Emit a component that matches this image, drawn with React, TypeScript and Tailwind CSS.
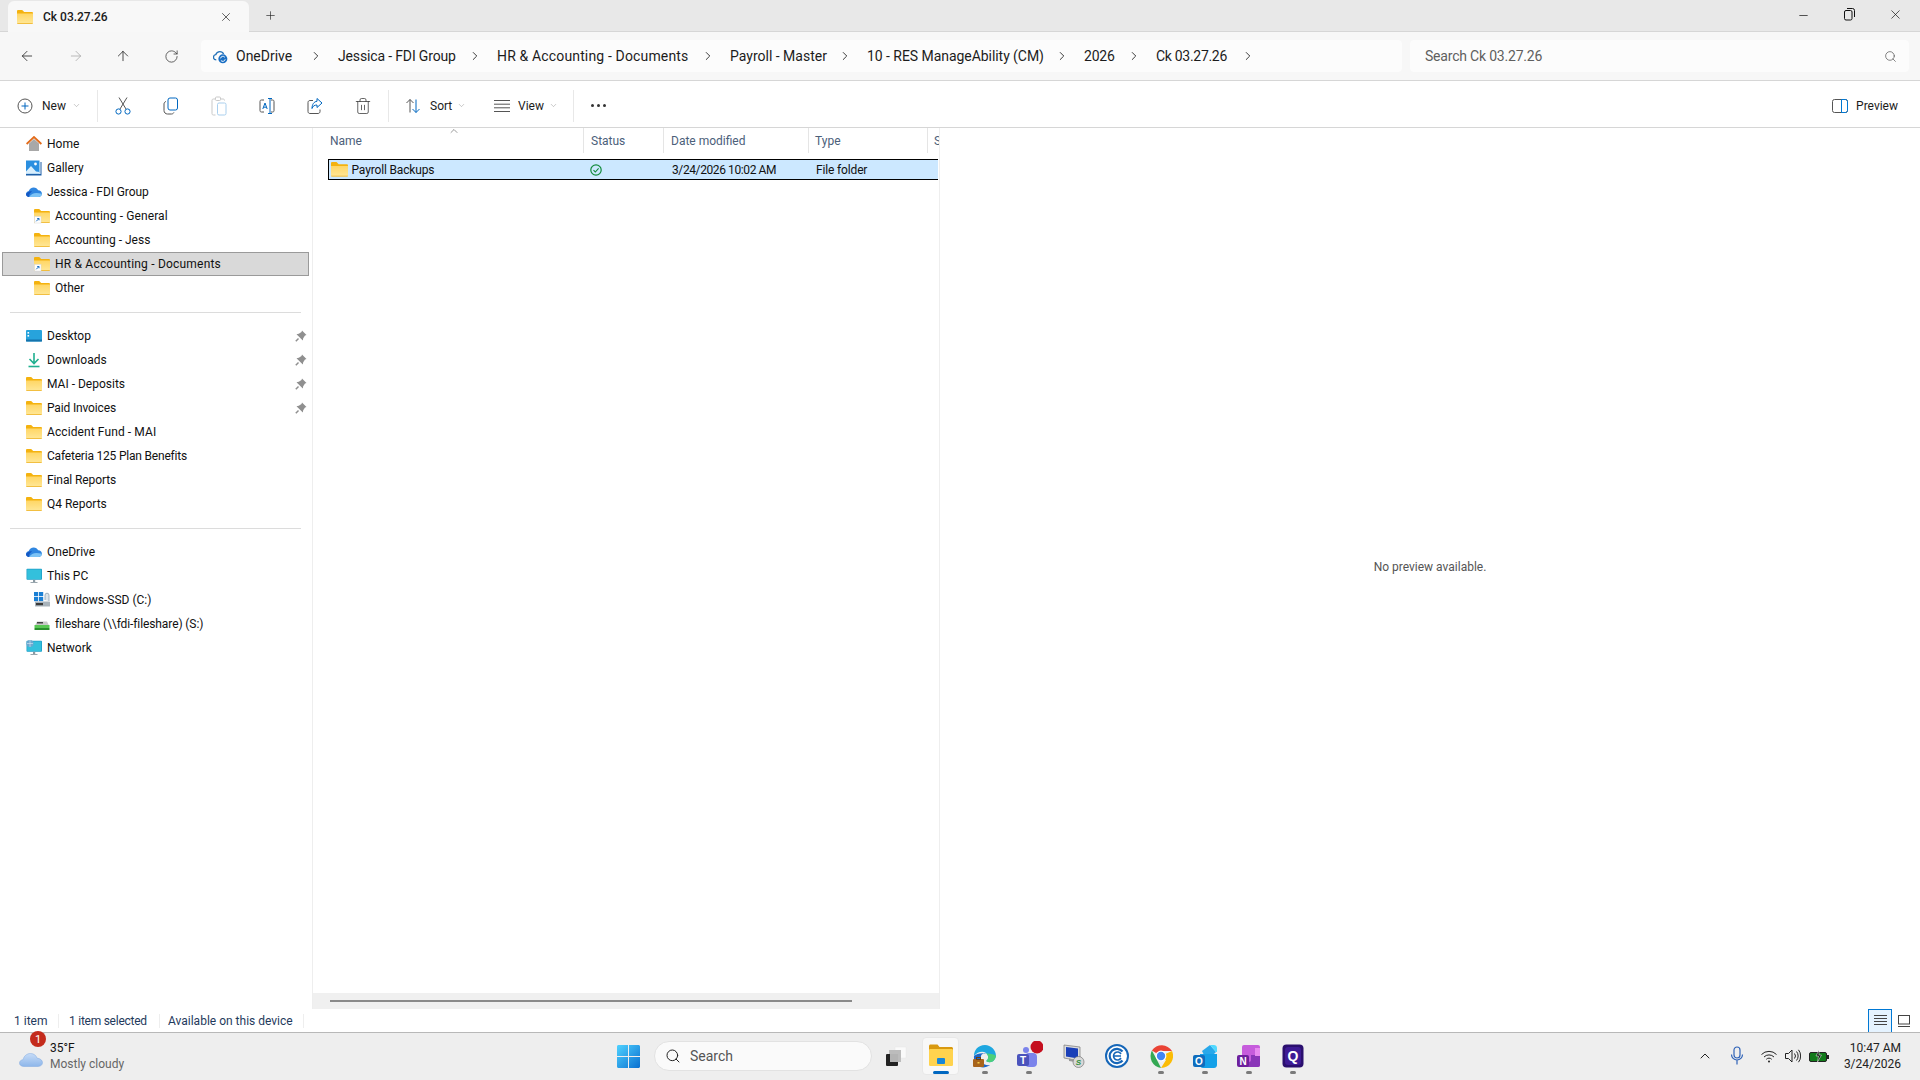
import { ReactNode } from "react";
import { ArrowLeft, ArrowRight, ArrowUp, ChevronDown, ChevronRight, ChevronUp, Minus, Plus, RotateCw, Search, Trash2, X } from "lucide-react";

function Folder({ shortcut = false, size = 16 }: { shortcut?: boolean; size?: number }) {
  return (
    <svg width={size} height={size} viewBox="0 0 16 16" className="shrink-0">
      <defs>
        <linearGradient id="folderFront" x1="0" y1="0" x2="0" y2="1">
          <stop offset="0" stopColor="#ffd665" />
          <stop offset="1" stopColor="#ffe797" />
        </linearGradient>
      </defs>
      <path d="M0 2.2C0 1.5.5 1 1.2 1h4l2 2h7.6c.7 0 1.2.5 1.2 1.2V7H0z" fill="#f4b20f" />
      <path d="M0 4.6h16v8.900c0 .7-.5 1.200-1.200 1.200H1.200C.5 14.700 0 14.200 0 13.500z" fill="url(#folderFront)" />
      <path d="M0 13.900h16c0 .5-.5.8-1.200.8H1.200c-.7 0-1.200-.3-1.200-.8z" fill="#eeb01c" />
      {shortcut && (
        <g>
          <rect x="0.5" y="8.500" width="6.500" height="6.500" fill="#fff" stroke="#d8d8d8" strokeWidth="0.5" />
          <path d="M2.200 13.300 L4.800 10.700 M3.200 10.500h1.800v1.800" stroke="#1a6fc4" strokeWidth="1" fill="none" />
        </g>
      )}
    </svg>
  );
}

function HomeIcon() {
  return (
    <svg width="16" height="16" viewBox="0 0 16 16">
      <path d="M3 7.500 8 3l5 4.500V15H3z" fill="#a8a8a8" />
      <path d="M0.600 8 8 1l7.400 7" fill="none" stroke="#e26b1a" strokeWidth="1.800" />
    </svg>
  );
}

function GalleryIcon() {
  return (
    <svg width="16" height="16" viewBox="0 0 16 16">
      <rect x="0" y="0.500" width="13.500" height="13" fill="#2b8fe0" />
      <circle cx="9.500" cy="4" r="1.400" fill="#fff" />
      <path d="M0 11.500 5 6l5 5.500 3.500 .5v1.500H0z" fill="#d9eefc" />
      <rect x="0" y="14" width="15.500" height="1.500" fill="#1c5fa8" />
      <rect x="14.500" y="2" width="1" height="12" fill="#1c5fa8" />
    </svg>
  );
}

function CloudIcon() {
  return (
    <svg width="16" height="16" viewBox="0 0 16 16">
      <path d="M3.200 13C1.400 13 0 11.700 0 10.100 0 8.600 1.100 7.400 2.600 7.200 3.400 4.900 5.400 3.400 7.700 3.400c2 0 3.700 1.100 4.500 2.900 2.100.1 3.800 1.700 3.800 3.500 0 1.800-1.600 3.200-3.500 3.200z" fill="#2f86e0" />
      <path d="M3 13 C6 9 9 8 16 9.800 15.800 11.700 14.300 13 12.500 13z" fill="#7cc3f5" />
      <path d="M0 10C2 7.500 4 7 6 7.500 3.500 9 3 11 3.200 13 1.400 13 0 11.700 0 10z" fill="#1458c4" />
    </svg>
  );
}

function DesktopIcon() {
  return (
    <svg width="16" height="16" viewBox="0 0 16 16">
      <rect x="0" y="2" width="16" height="11.500" rx="1" fill="#27a3dc" />
      <rect x="0" y="11.500" width="16" height="2" fill="#1573ab" />
      <rect x="1.500" y="4" width="1.600" height="1.600" fill="#fff" />
      <rect x="1.500" y="7" width="1.600" height="1.600" fill="#fff" />
    </svg>
  );
}

function DownloadIcon() {
  return (
    <svg width="16" height="16" viewBox="0 0 16 16" fill="none" stroke="#1fb08f" strokeWidth="1.600">
      <path d="M8 1v10M3.500 7 8 11.500 12.500 7" />
      <path d="M2.500 14.500h11" />
    </svg>
  );
}

function MonitorIcon({ globe = false }: { globe?: boolean }) {
  return (
    <svg width="16" height="16" viewBox="0 0 16 16">
      <rect x="0.500" y="0.800" width="15.500" height="11" rx="0.800" fill="#1f9fc8" />
      <rect x="1.200" y="1.500" width="14" height="9.600" fill="#33c0dc" />
      <rect x="7" y="11.800" width="2.200" height="2.400" fill="#8a9aa3" />
      <rect x="4.500" y="14" width="7" height="1" fill="#9aa7ae" />
      {globe && <circle cx="4" cy="3.500" r="3.500" fill="#6ba7cf" />}
      {globe && <path d="M1 3.500h6M4 0v7" stroke="#dcebf5" strokeWidth="0.600" />}
    </svg>
  );
}

function SsdIcon() {
  return (
    <svg width="16" height="16" viewBox="0 0 16 16">
      <rect x="0" y="0" width="4.200" height="4.200" fill="#1a7fd4" />
      <rect x="5" y="0" width="4.200" height="4.200" fill="#1a7fd4" />
      <rect x="0" y="5" width="4.200" height="4.200" fill="#1a7fd4" />
      <rect x="5" y="5" width="4.200" height="4.200" fill="#1a7fd4" />
      <rect x="1" y="9.500" width="15" height="5" rx="0.600" fill="#a9b3bb" />
      <rect x="2" y="11" width="7" height="2.200" fill="#3a3a3a" />
      <path d="M11 8V3.200a2 2 0 0 1 4 0V9" fill="#dce3e8" stroke="#8ba0b0" strokeWidth="0.800" />
    </svg>
  );
}

function ShareDriveIcon() {
  return (
    <svg width="16" height="16" viewBox="0 0 16 16">
      <path d="M3 5.500h10l2 4H1z" fill="#c9c9c9" />
      <rect x="0.500" y="9" width="15" height="3" fill="#59c754" />
      <rect x="0.500" y="12" width="15" height="2" fill="#2a8f2d" />
      <rect x="3" y="6" width="6" height="1.500" fill="#444" />
    </svg>
  );
}

function Pin() {
  return (
    <svg width="12" height="12" viewBox="0 0 12 12" className="absolute right-[2px] top-[6px]">
      <path d="M7 0.500 11.500 5 10 5.500 8.200 8.200 7.800 10.500 1.500 4.200 3.800 3.800 6.500 2z" fill="#8f8f8f" />
      <path d="M3.500 8.500 0.800 11.200" stroke="#8f8f8f" strokeWidth="1.500" />
    </svg>
  );
}

function NavRow({ icon, label, nested = false, pinned = false, selected = false, fit = "" }: { icon: ReactNode; label: string; nested?: boolean; pinned?: boolean; selected?: boolean; fit?: string }) {
  return (
    <div className={`relative ml-[2px] flex h-[24px] w-[307px] items-center gap-[5px] ${selected ? "border border-[#9a9a9a] bg-[#d9d9d9] pl-[31px]" : nested ? "pl-[32px]" : "pl-[24px]"}`}>
      {icon}
      <span className={`whitespace-nowrap text-[12px] text-[#111] ${fit}`}>{label}</span>
      {pinned && <Pin />}
    </div>
  );
}

function NavSep() {
  return <div className="my-[11.500px] ml-[10px] h-px w-[291px] bg-[#dcdcdc]" />;
}

function Sidebar() {
  return (
    <aside className="w-[313px] shrink-0 border-r border-[#eeeeee] pt-[4px]">
      <NavRow icon={<HomeIcon />} label="Home" />
      <NavRow icon={<GalleryIcon />} label="Gallery" />
      <NavRow icon={<CloudIcon />} label="Jessica - FDI Group" fit="tracking-[-0.1px]" />
      <NavRow icon={<Folder shortcut />} label="Accounting - General" nested fit="tracking-[0.1px]" />
      <NavRow icon={<Folder />} label="Accounting - Jess" nested />
      <NavRow icon={<Folder shortcut />} label="HR & Accounting - Documents" nested selected fit="tracking-[0.2px]" />
      <NavRow icon={<Folder />} label="Other" nested />
      <NavSep />
      <NavRow icon={<DesktopIcon />} label="Desktop" pinned />
      <NavRow icon={<DownloadIcon />} label="Downloads" pinned />
      <NavRow icon={<Folder />} label="MAI - Deposits" pinned />
      <NavRow icon={<Folder />} label="Paid Invoices" pinned fit="tracking-[-0.15px]" />
      <NavRow icon={<Folder />} label="Accident Fund - MAI" fit="tracking-[0.1px]" />
      <NavRow icon={<Folder />} label="Cafeteria 125 Plan Benefits" fit="tracking-[-0.2px]" />
      <NavRow icon={<Folder />} label="Final Reports" fit="tracking-[-0.1px]" />
      <NavRow icon={<Folder />} label="Q4 Reports" />
      <NavSep />
      <NavRow icon={<CloudIcon />} label="OneDrive" />
      <NavRow icon={<MonitorIcon />} label="This PC" />
      <NavRow icon={<SsdIcon />} label="Windows-SSD (C:)" nested />
      <NavRow icon={<ShareDriveIcon />} label="fileshare (\\fdi-fileshare) (S:)" nested fit="tracking-[-0.1px]" />
      <NavRow icon={<MonitorIcon globe />} label="Network" />
    </aside>
  );
}

function ToolSep() {
  return <div className="h-[32px] w-px shrink-0 bg-[#e8e8e8]" />;
}

function ToolIcon({ children }: { children: ReactNode }) {
  return <div className="flex w-[48px] shrink-0 justify-center">{children}</div>;
}

function TabBar() {
  return (
    <div className="flex h-[32px] shrink-0 items-start border-b border-[#d6d6d6] bg-[#e8e8e8]">
      <div className="ml-[8px] mt-[1px] flex h-[31px] w-[241px] items-center rounded-t-[6px] bg-[#f8f8f8] pl-[9px]">
        <Folder size={16} />
        <span className="ml-[10px] text-[12px] font-medium text-[#1a1a1a]">Ck 03.27.26</span>
        <X size={14} strokeWidth={1.1} className="ml-auto mr-[16px] text-[#111]" />
      </div>
      <Plus size={13} strokeWidth={1.2} className="ml-[15px] mt-[9px] text-[#222]" />
      <div className="ml-auto flex items-center text-[#111]">
        <Minus size={13} strokeWidth={1.3} className="mr-[34px] mt-[8px]" />
        <svg width="11" height="13" viewBox="0 0 11 13" fill="none" stroke="#111" className="mr-[33px] mt-[7px]">
          <rect x="0.500" y="2.500" width="7.500" height="9.500" rx="1.500" />
          <path d="M3 0.500h5.500a2 2 0 0 1 2 2V9" />
        </svg>
        <X size={15} strokeWidth={1.1} className="mr-[17px] mt-[7px]" />
      </div>
    </div>
  );
}

function Crumbs() {
  const parts = [
    { label: "OneDrive", w: "w-[102px]", fit: "" },
    { label: "Jessica - FDI Group", w: "w-[159px]", fit: "tracking-[-0.15px]" },
    { label: "HR & Accounting - Documents", w: "w-[233px]", fit: "tracking-[0.15px]" },
    { label: "Payroll - Master", w: "w-[137px]", fit: "" },
    { label: "10 - RES ManageAbility (CM)", w: "w-[217px]", fit: "tracking-[-0.05px]" },
    { label: "2026", w: "w-[72px]", fit: "tracking-[-0.2px]" },
    { label: "Ck 03.27.26", w: "w-[114px]", fit: "tracking-[-0.3px]" },
  ];
  return (
    <div className="flex h-[32px] w-[1201px] items-center rounded-[4px] bg-[#fcfcfc] pl-[12px]">
      <svg width="15" height="15" viewBox="0 0 16 16" className="mr-[8px] shrink-0">
        <path d="M3.500 11.500C1.800 11.500.5 10.300.5 8.800c0-1.400 1-2.500 2.400-2.700C3.600 4 5.300 2.700 7.300 2.700c1.800 0 3.300 1 4 2.600" fill="none" stroke="#2271b8" strokeWidth="1.400" />
        <circle cx="10.500" cy="10.500" r="4.800" fill="#1a6fc4" />
        <path d="M8 10a2.600 2.600 0 0 1 4.600-1.200M13 11a2.600 2.600 0 0 1-4.600 1.200" stroke="#fff" strokeWidth="1" fill="none" />
      </svg>
      {parts.map((p) => (
        <div key={p.label} className={`${p.w} flex shrink-0 items-center`}>
          <span className={`whitespace-nowrap text-[14px] text-[#1c1c1c] ${p.fit}`}>{p.label}</span>
          <ChevronRight size={14} strokeWidth={1.4} className="ml-auto mr-[15px] shrink-0 text-[#111]" />
        </div>
      ))}
    </div>
  );
}

function AddressRow() {
  return (
    <div className="flex h-[49px] shrink-0 items-center border-b border-[#d6d6d6] bg-[#f7f7f7]">
      <ArrowLeft size={16} strokeWidth={1.2} className="ml-[19px] shrink-0 text-[#222]" />
      <ArrowRight size={16} strokeWidth={1.2} className="ml-[33px] shrink-0 text-[#aaa]" />
      <ArrowUp size={16} strokeWidth={1.2} className="ml-[31px] shrink-0 text-[#222]" />
      <RotateCw size={15} strokeWidth={1.2} className="ml-[33px] mr-[22px] shrink-0 text-[#333]" />
      <Crumbs />
      <div className="ml-[8px] flex h-[32px] w-[499px] items-center justify-between rounded-[4px] bg-[#fcfcfc] pl-[15px] pr-[12px]">
        <span className="text-[14px] tracking-[-0.2px] text-[#5f5f5f]">Search Ck 03.27.26</span>
        <Search size={13} strokeWidth={1.2} className="text-[#444]" />
      </div>
    </div>
  );
}

function Toolbar() {
  return (
    <div className="flex h-[47px] shrink-0 items-center border-b border-[#d6d6d6] bg-white pt-[3px] text-[#1c1c1c]">
      <svg width="16" height="16" viewBox="0 0 16 16" fill="none" className="ml-[17px] shrink-0">
        <circle cx="8" cy="8" r="7" stroke="#555" />
        <path d="M8 4.500v7M4.500 8h7" stroke="#0067c0" />
      </svg>
      <span className="ml-[9px] w-[25px] text-[12px]">New</span>
      <ChevronDown size={9} strokeWidth={1.2} className="ml-[5px] mr-[16px] text-[#888]" />
      <ToolSep />
      <div className="ml-[1px]" />
      <ToolIcon>
        <svg width="16" height="20" viewBox="0 0 16 20" fill="none">
          <path d="M4 1.500 11 13M12 1.500 5 13" stroke="#555" />
          <circle cx="3.500" cy="15.500" r="2.600" stroke="#0067c0" />
          <circle cx="12.500" cy="15.500" r="2.600" stroke="#0067c0" />
        </svg>
      </ToolIcon>
      <ToolIcon>
        <svg width="16" height="18" viewBox="0 0 16 18" fill="none">
          <rect x="5" y="1" width="9.500" height="12" rx="2" stroke="#0067c0" />
          <path d="M3 4.500c-1.200.3-2 1.200-2 2.500v6.500c0 2 1.500 3.500 3.500 3.500h4c1 0 2-.6 2.400-1.500" stroke="#555" />
        </svg>
      </ToolIcon>
      <ToolIcon>
        <svg width="16" height="20" viewBox="0 0 16 20" fill="none">
          <path d="M4 3H2.500C1.500 3 1 3.500 1 4.500v13c0 1 .5 1.500 1.500 1.500h2" stroke="#c9c9c9" />
          <rect x="4.500" y="1" width="5" height="3.500" rx="1" stroke="#c9c9c9" />
          <path d="M10 3h2c1 0 1.500.5 1.500 1.500" stroke="#c9c9c9" />
          <rect x="6.500" y="7" width="8.500" height="12" rx="1.500" stroke="#a9cfee" />
        </svg>
      </ToolIcon>
      <ToolIcon>
        <svg width="16" height="18" viewBox="0 0 16 18" fill="none">
          <path d="M5 3H2.500C1.500 3 1 3.500 1 4.500v9c0 1 .5 1.500 1.500 1.500H5M12 3h1.500c1 0 1.500.5 1.500 1.500v9c0 1-.5 1.500-1.500 1.500H12" stroke="#555" />
          <path d="M9 1.500h4M9 16.500h4M11 1.500v15" stroke="#0067c0" />
          <path d="M3.800 12 6 6l2.200 6M4.500 10.200h3" stroke="#0067c0" />
        </svg>
      </ToolIcon>
      <ToolIcon>
        <svg width="16" height="18" viewBox="0 0 16 18" fill="none">
          <path d="M6 3.500H3C1.800 3.500 1 4.300 1 5.500v9C1 15.700 1.800 16.500 3 16.500h8c1.200 0 2-.8 2-2v-2" stroke="#555" />
          <path d="M10 1.500 15 6l-5 4.500V8C7.500 8 6 9 5 11.500 5 7.500 7 4.500 10 4.300z" stroke="#0067c0" strokeLinejoin="round" />
        </svg>
      </ToolIcon>
      <ToolIcon>
        <Trash2 size={18} strokeWidth={1} className="text-[#333]" />
      </ToolIcon>
      <div className="ml-[1px]" />
      <ToolSep />
      <svg width="16" height="16" viewBox="0 0 16 16" fill="none" className="ml-[16px] shrink-0">
        <path d="M5 14.500V1.500M1.500 5 5 1.500 8.500 5" stroke="#555" />
        <path d="M11 1.500v13M7.500 11l3.500 3.500 3.500-3.500" stroke="#0067c0" />
      </svg>
      <span className="ml-[9px] w-[21px] text-[12px]">Sort</span>
      <ChevronDown size={9} strokeWidth={1.2} className="ml-[6px] text-[#888]" />
      <svg width="16" height="12" viewBox="0 0 16 12" stroke="#555" className="ml-[28px] shrink-0">
        <path d="M0 .5h16M0 4.200h16M0 7.800h16M0 11.500h16" />
      </svg>
      <span className="ml-[8px] w-[26px] text-[12px]">View</span>
      <ChevronDown size={9} strokeWidth={1.2} className="ml-[5px] mr-[15px] text-[#888]" />
      <ToolSep />
      <div className="ml-[17px] flex gap-[3px]">
        <span className="h-[3px] w-[3px] rounded-full bg-[#333]" />
        <span className="h-[3px] w-[3px] rounded-full bg-[#333]" />
        <span className="h-[3px] w-[3px] rounded-full bg-[#333]" />
      </div>
      <svg width="16" height="14" viewBox="0 0 16 14" fill="none" className="ml-auto shrink-0">
        <rect x="0.500" y="0.500" width="15" height="13" rx="2" stroke="#555" />
        <path d="M9.500 .5h4c1.200 0 2 .8 2 2v9c0 1.200-.8 2-2 2h-4z" stroke="#0078d4" />
      </svg>
      <span className="ml-[8px] mr-[22px] text-[12px]">Preview</span>
    </div>
  );
}

function FilePane() {
  const cols = [
    { label: "Name", w: "w-[271px] pl-[17px]" },
    { label: "Status", w: "w-[80px] pl-[7px]" },
    { label: "Date modified", w: "w-[145px] pl-[7px]" },
    { label: "Type", w: "w-[119px] pl-[6px]" },
    { label: "S", w: "w-[11px] pl-[6px]" },
  ];
  return (
    <section className="flex w-[627px] shrink-0 flex-col border-r border-[#eeeeee]">
      <div className="relative flex h-[25px] shrink-0 overflow-hidden text-[12px] text-[#4c607a]">
        <ChevronUp size={12} strokeWidth={1.2} className="absolute left-[135px] top-[-3px] text-[#555]" />
        {cols.map((c) => (
          <div key={c.label} className={`${c.w} flex h-full shrink-0 items-center overflow-hidden whitespace-nowrap border-r border-[#e5e5e5] last:border-r-0`}>
            {c.label}
          </div>
        ))}
      </div>
      <div className="ml-[14.500px] mt-[6px] flex h-[21px] w-[610px] shrink-0 items-center border-y border-l border-black bg-[#cce8ff] text-[12px] text-[#111]">
        <div className="flex w-[256.500px] shrink-0 items-center pl-[2px]">
          <Folder size={17} />
          <span className="ml-[4px] tracking-[-0.15px]">Payroll Backups</span>
        </div>
        <div className="w-[80px] shrink-0 pl-[5px]">
          <svg width="12" height="12" viewBox="0 0 12 12" fill="none" stroke="#118a3a">
            <circle cx="6" cy="6" r="5.200" strokeWidth="1.200" />
            <path d="M3.500 6.200 5.300 8 8.600 4.400" strokeWidth="1.100" />
          </svg>
        </div>
        <div className="w-[144px] shrink-0 whitespace-nowrap pl-[7px] tracking-[-0.4px]">3/24/2026 10:02 AM</div>
        <div className="pl-[7px] tracking-[-0.15px]">File folder</div>
      </div>
      <div className="mt-auto flex h-[16px] shrink-0 items-center bg-[#f0f0f0] pl-[17px]">
        <div className="h-[2px] w-[522px] bg-[#8a8a8a]" />
      </div>
    </section>
  );
}

function StatusBar() {
  return (
    <div className="flex h-[23px] shrink-0 items-center bg-white text-[12px] text-[#1f3a5c]">
      <span className="ml-[14px] w-[43.500px]">1 item</span>
      <div className="h-[14px] w-px bg-[#eeeeee]" />
      <span className="ml-[10.500px] w-[89.500px] whitespace-nowrap tracking-[-0.25px]">1 item selected</span>
      <div className="h-[14px] w-px bg-[#eeeeee]" />
      <span className="ml-[8.500px] w-[135px] whitespace-nowrap">Available on this device</span>
      <div className="h-[14px] w-px bg-[#eeeeee]" />
      <div className="ml-auto flex h-full items-center">
        <div className="flex h-[24px] w-[24px] items-center justify-center border border-[#0078d4] bg-[#e5f3ff]">
          <svg width="13" height="11" viewBox="0 0 13 11" stroke="#444">
            <path d="M0 .5h13M0 3.500h13M0 6.500h13M0 9.500h13" />
          </svg>
        </div>
        <svg width="12" height="12" viewBox="0 0 12 12" fill="none" stroke="#444" className="ml-[6px] mr-[10px]">
          <rect x="0.500" y="0.500" width="11" height="8.500" />
          <path d="M0 11.500h12" />
        </svg>
      </div>
    </div>
  );
}

function AppSlot({ children, dot = false }: { children: ReactNode; dot?: boolean }) {
  return (
    <div className="relative flex h-[38px] w-[44px] shrink-0 items-center justify-center">
      {children}
      {dot && <span className="absolute bottom-[1px] h-[3px] w-[6px] rounded-full bg-[#7a7a7a]" />}
    </div>
  );
}

function Taskbar() {
  return (
    <footer className="flex h-[48px] shrink-0 items-center border-t border-[#b8b8b8] bg-[#eeeeee] pb-[1px]">
      <div className="relative w-[617px] shrink-0 pl-[50px] text-[12px] leading-[16px]">
        <svg width="24" height="16" viewBox="0 0 24 16" className="absolute left-[19px] top-[11px]">
          <defs>
            <linearGradient id="wx" x1="0" y1="0" x2="0" y2="1">
              <stop offset="0" stopColor="#c7dcf7" />
              <stop offset="1" stopColor="#8db6ea" />
            </linearGradient>
          </defs>
          <path d="M5 15.500C2.300 15.500.5 14 .5 12c0-1.800 1.500-3.200 3.500-3.300C5 5 7.700 2.500 11.500 2.500c3.300 0 5.700 2 6.500 4.600 3 .2 5.500 2.200 5.500 4.500 0 2.200-1.800 3.900-4.500 3.900z" fill="url(#wx)" stroke="#7ea8e0" strokeWidth="0.500" />
        </svg>
        <span className="absolute left-[30px] top-[-9px] flex h-[16px] w-[16px] items-center justify-center rounded-full bg-[#c42b1c] text-[11px] leading-none text-white">1</span>
        <div className="text-[#111]">35°F</div>
        <div className="text-[#666]">Mostly cloudy</div>
      </div>
      <svg width="23" height="23" viewBox="0 0 23 23" className="shrink-0">
        <defs>
          <linearGradient id="win" x1="0" y1="0" x2="1" y2="1">
            <stop offset="0" stopColor="#4fd2ff" />
            <stop offset="1" stopColor="#0a6fd0" />
          </linearGradient>
        </defs>
        <path d="M0 1.500C0 .7.700 0 1.500 0H11v11H0zM12 0h9.500c.8 0 1.500.7 1.500 1.500V11H12zM0 12h11v11H1.500C.7 23 0 22.300 0 21.500zM12 12h11v9.500c0 .8-.7 1.500-1.500 1.500H12z" fill="url(#win)" />
      </svg>
      <div className="ml-[14px] flex h-[30px] w-[218px] shrink-0 items-center rounded-full border border-[#e2e2e2] bg-[#fafafa] pl-[10px]">
        <Search size={16} strokeWidth={1.5} className="text-[#222]" />
        <span className="ml-[9px] text-[14px] text-[#555]">Search</span>
      </div>
      <div className="ml-[12px] flex w-[24px] shrink-0 justify-center">
        <svg width="24" height="24" viewBox="0 0 24 24">
          <rect x="11" y="3" width="11" height="11" fill="#fafafa" stroke="#e8e8e8" strokeWidth="0.500" />
          <rect x="5" y="6" width="12" height="12" fill="#bcbcbc" />
          <rect x="2" y="10" width="12" height="12" rx="1" fill="#222" />
          <rect x="6" y="10" width="8" height="8" fill="#b4b4b4" />
        </svg>
      </div>
      <div className="ml-[11px] flex items-center">
        <AppSlot>
          <div className="absolute left-[3px] top-0 h-[38px] w-[37px] rounded-[4px] border border-[#e8e8e8] bg-[#f8f8f8]" />
          <svg width="24" height="24" viewBox="0 0 24 24" className="relative mb-[2px]">
            <path d="M0 3c0-.800.700-1.500 1.500-1.500h7l2 2.500h12c.800 0 1.500.7 1.500 1.500V9H0z" fill="#d99a10" />
            <rect x="0" y="6" width="24" height="17" rx="1.200" fill="#ffd34e" />
            <rect x="8" y="15" width="8" height="6" rx="1" fill="#1787d8" />
          </svg>
          <span className="absolute bottom-[1px] h-[3px] w-[16px] rounded-full bg-[#0067c0]" />
        </AppSlot>
        <AppSlot dot>
          <svg width="24" height="24" viewBox="0 0 24 24">
            <path d="M12 1C5 1 1 6 1 12c4-5 12-6 14 0 1 3-2 5-2 5 5 3 9 0 10-5C23 6 18 1 12 1z" fill="#1ea7e0" />
            <path d="M23 12c-1 5-5 8-10 5 0 0 3-2 2-5-.3-1-1-2-2-2.500 5 0 9 1 10 2.500z" fill="#4ccf7a" />
            <path d="M1 12c-.500 5 2 9 6 11 3 .8 7 .500 10-2-6 1-10-3-9-9 .5-2 3-3 5-2.500-5-1-10 .5-12 2.500z" fill="#1b66c9" />
            <rect x="0" y="15" width="11" height="8" rx="1" fill="#a8641c" />
            <rect x="3.500" y="13.500" width="4" height="2" fill="none" stroke="#6b3f10" />
            <rect x="4.500" y="18" width="2" height="1.500" fill="#f5d04b" />
          </svg>
        </AppSlot>
        <AppSlot dot>
          <svg width="28" height="30" viewBox="0 0 28 30">
            <circle cx="22" cy="6" r="6.500" fill="#c50f1f" />
            <circle cx="11" cy="9" r="3" fill="#7b83eb" />
            <rect x="10" y="12" width="12" height="14" rx="4" fill="#7b83eb" />
            <rect x="2" y="13" width="12" height="12" rx="2" fill="#4b53bc" />
            <text x="8" y="22.500" textAnchor="middle" fontSize="10" fontWeight="700" fill="#fff" fontFamily="Liberation Sans">T</text>
          </svg>
        </AppSlot>
        <AppSlot>
          <svg width="24" height="26" viewBox="0 0 24 26">
            <path d="M3 2 19 4v14L3 15z" fill="#dcdcdc" stroke="#777" strokeWidth="0.700" />
            <path d="M5 4 17 5.500v10L5 13.500z" fill="#1a3fb8" />
            <path d="M8 15.500 14 17v2l-6-1z" fill="#9a9a9a" />
            <circle cx="17.500" cy="19" r="5.500" fill="#d8d8d8" stroke="#777" strokeWidth="0.700" />
            <text x="17.500" y="22" textAnchor="middle" fontSize="8" fontWeight="700" fontStyle="italic" fill="#2f8f3a" fontFamily="Liberation Sans">S</text>
          </svg>
        </AppSlot>
        <AppSlot>
          <svg width="24" height="24" viewBox="0 0 24 24" fill="none">
            <circle cx="12" cy="12" r="11" stroke="#1566b8" strokeWidth="2" fill="#fff" />
            <path d="M17.500 7.500A7.200 7.200 0 1 0 17.500 16.500" stroke="#1566b8" strokeWidth="2.200" />
            <path d="M16 10A4 4 0 1 0 16 14M9 12h7" stroke="#1566b8" strokeWidth="1.600" />
          </svg>
        </AppSlot>
        <AppSlot dot>
          <svg width="24" height="24" viewBox="0 0 24 24">
            <path d="M12 12 2.900 6.500A12 12 0 0 1 23 7H12z" fill="#ea4335" />
            <path d="M12 12 23 7a12 12 0 0 1-11 17l5-8z" fill="#fbbc05" />
            <path d="M12 24A12 12 0 0 1 2.900 6.500L8 16z" fill="#34a853" />
            <circle cx="12" cy="12" r="5.400" fill="#fff" />
            <circle cx="12" cy="12" r="4.200" fill="#4285f4" />
          </svg>
        </AppSlot>
        <AppSlot dot>
          <svg width="24" height="24" viewBox="0 0 24 24">
            <path d="M9 7 17 1l6 7-9 9z" fill="#28a8ea" />
            <path d="M17 1h4c1.500 0 3 1 3 3v4h-1z" fill="#50d9ff" />
            <path d="M7 10h17v11c0 1.500-1 3-3 3H10c-2 0-3-1.500-3-3z" fill="#14a0e8" />
            <rect x="0" y="11" width="12" height="12" rx="2" fill="#0f6cbd" />
            <text x="6" y="20.500" textAnchor="middle" fontSize="10" fontWeight="700" fill="#fff" fontFamily="Liberation Sans">O</text>
          </svg>
        </AppSlot>
        <AppSlot dot>
          <svg width="24" height="24" viewBox="0 0 24 24">
            <rect x="5" y="1" width="18" height="22" rx="2" fill="#c65cdc" />
            <path d="M14 11h9v10c0 1-1 2-2 2H5v-5h7c1 0 2-1 2-2z" fill="#8a36b8" />
            <rect x="18" y="4" width="5" height="8" fill="#e88af0" />
            <rect x="0" y="11" width="12" height="12" rx="2" fill="#6d1f9c" />
            <text x="6" y="20.500" textAnchor="middle" fontSize="10" fontWeight="700" fill="#fff" fontFamily="Liberation Sans">N</text>
          </svg>
        </AppSlot>
        <AppSlot dot>
          <svg width="22" height="24" viewBox="0 0 22 24">
            <rect x="0.500" y="0.500" width="21" height="23" rx="4" fill="#2a0f6e" />
            <rect x="3" y="3" width="16" height="18" rx="3" fill="#3d1a94" />
            <text x="11" y="17" textAnchor="middle" fontSize="14" fontWeight="700" fill="#fff" fontFamily="Liberation Sans">Q</text>
          </svg>
        </AppSlot>
      </div>
      <div className="ml-auto flex items-center text-[#222]">
        <ChevronUp size={16} strokeWidth={1.5} />
        <svg width="14" height="20" viewBox="0 0 14 20" fill="none" stroke="#2f63b8" strokeWidth="1.200" className="ml-[17px]">
          <rect x="4" y="1" width="6" height="11" rx="3" />
          <path d="M1.500 8.500a5.500 5.500 0 0 0 11 0M7 14v4.500" />
        </svg>
        <svg width="16" height="13" viewBox="0 0 16 13" fill="none" stroke="#222" className="ml-[17px]">
          <path d="M.5 4.500a10.500 10.500 0 0 1 15 0M3 7a7 7 0 0 1 10 0M5.300 9.300a3.700 3.700 0 0 1 5.400 0" />
          <circle cx="8" cy="11.500" r="1" fill="#222" stroke="none" />
        </svg>
        <svg width="16" height="14" viewBox="0 0 16 14" fill="none" stroke="#222" className="ml-[8px]">
          <path d="M.5 4.500h3L7 1v12L3.500 9.500h-3z" />
          <path d="M9.500 4.500a4 4 0 0 1 0 5M11.500 2.500a7 7 0 0 1 0 9M13.500.8a10 10 0 0 1 0 12.400" />
        </svg>
        <svg width="20" height="12" viewBox="0 0 20 12" className="ml-[8px]">
          <rect x="0.500" y="2.500" width="17" height="9" rx="1.500" fill="#117a1a" stroke="#222" />
          <rect x="18" y="5" width="2" height="4" fill="#222" />
          <path d="M10 0 7 6h2.500L8.500 12 12.500 5H10z" fill="#111" stroke="#fff" strokeWidth="0.500" />
        </svg>
        <div className="ml-[15px] mr-[19px] text-right text-[12px] leading-[16px] text-[#222]">
          <div>10:47 AM</div>
          <div>3/24/2026</div>
        </div>
      </div>
    </footer>
  );
}

export default function App() {
  return (
    <div className="flex h-[1080px] w-[1920px] flex-col overflow-hidden bg-white font-['Roboto','Noto_Sans',sans-serif]">
      <TabBar />
      <AddressRow />
      <Toolbar />
      <main className="flex min-h-0 flex-1">
        <Sidebar />
        <FilePane />
        <div className="flex flex-1 items-center justify-center pb-[3px] text-[12px] text-[#555]">No preview available.</div>
      </main>
      <StatusBar />
      <Taskbar />
    </div>
  );
}
